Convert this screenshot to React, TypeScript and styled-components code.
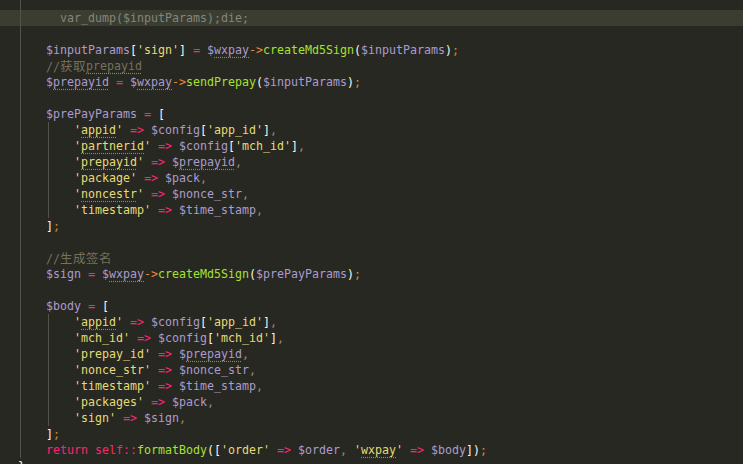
import * as React from 'react'
import styled, { createGlobalStyle } from 'styled-components'

type Kind = 'v' | 's' | 'o' | 'f' | 'p' | 'a' | 'sc' | 'c' | 'cm' | 'k' | 'd' | 'sp'

const colors: Record<Kind, string> = {
  v: '#ab9bce',
  s: '#e6db74',
  o: '#f92672',
  f: '#a6e22e',
  p: '#f8f8f2',
  a: '#f2843c',
  sc: '#cf8a2e',
  c: '#a08870',
  cm: '#75715e',
  k: '#f92672',
  d: '#85857a',
  sp: '#f8f8f2',
}

const GlobalStyle = createGlobalStyle`
  html, body {
    margin: 0;
    padding: 0;
    background: #272822;
  }
  #root {
    height: 464px;
    overflow: hidden;
  }
`

const Editor = styled.div`
  background: #272822;
  height: 470px;
  margin-top: -6px;
  font-family: "DejaVu Sans Mono", "Liberation Mono", monospace;
  font-size: 11.63px;
  line-height: 16px;
`

const Row = styled.div<{ $active?: boolean }>`
  display: flex;
  align-items: center;
  height: 16px;
  padding-left: 18px;
  white-space: pre;
  background: ${(p) => (p.$active ? '#3c3d31' : 'transparent')};
`

// indent guide, one per indent level
const Guide = styled.span`
  display: inline-block;
  flex: none;
  width: 28px;
  height: 16px;
  background: linear-gradient(
    to right,
    transparent 2px,
    #53534b 2px,
    #53534b 3px,
    transparent 3px
  );
`

const Lead = styled.span`
  display: inline-block;
  width: 14px;
`

const Token = styled.span<{ $kind: Kind; $squiggle?: boolean }>`
  color: ${(p) => colors[p.$kind]};
  text-decoration: ${(p) => (p.$squiggle ? 'underline dotted #789c3c' : 'none')};
  text-underline-offset: 3px;
`

const Cjk = styled.span`
  font-family: "Noto Sans CJK SC", sans-serif;
  font-size: 12.5px;
  letter-spacing: 0.5px;
`

type Tok = [Kind, string, boolean?]
type Line = { guides: number; lead?: boolean; toks: Tok[]; active?: boolean }

const entry = (key: Tok[], val: Tok[]): Line => ({
  guides: 2,
  toks: [...key, ['sp', ' '], ['o', '=>'], ['sp', ' '], ...val, ['c', ',']],
})

const cfg = (k: string): Tok[] => [
  ['v', '$config'],
  ['p', '['],
  ['s', `'${k}'`],
  ['p', ']'],
]

const key = (k: string, sq = false): Tok[] =>
  sq ? [['s', "'"], ['s', k, true], ['s', "'"]] : [['s', `'${k}'`]]

const lines: Line[] = [
  { guides: 1, toks: [] },
  { guides: 1, lead: true, toks: [['d', 'var_dump($inputParams);die;']], active: true },
  { guides: 1, toks: [] },
  {
    guides: 1,
    toks: [
      ['v', '$inputParams'], ['p', '['], ['s', "'sign'"], ['p', ']'], ['sp', ' '], ['o', '='], ['sp', ' '],
      ['v', '$'], ['v', 'wxpay', true], ['a', '->'], ['f', 'createMd5Sign'], ['p', '('],
      ['v', '$inputParams'], ['p', ')'], ['sc', ';'],
    ],
  },
  { guides: 1, toks: [['cm', '//\u83b7\u53d6'], ['cm', 'prepayid', true]] },
  {
    guides: 1,
    toks: [
      ['v', '$'], ['v', 'prepayid', true], ['sp', ' '], ['o', '='], ['sp', ' '],
      ['v', '$'], ['v', 'wxpay', true], ['a', '->'], ['f', 'sendPrepay'], ['p', '('],
      ['v', '$inputParams'], ['p', ')'], ['sc', ';'],
    ],
  },
  { guides: 1, toks: [] },
  { guides: 1, toks: [['v', '$prePayParams'], ['sp', ' '], ['o', '='], ['sp', ' '], ['p', '[']] },
  entry(key('appid', true), cfg('app_id')),
  entry(key('partnerid', true), cfg('mch_id')),
  entry(key('prepayid', true), [['v', '$'], ['v', 'prepayid', true]]),
  entry(key('package'), [['v', '$pack']]),
  entry(key('noncestr', true), [['v', '$nonce_str']]),
  entry(key('timestamp'), [['v', '$time_stamp']]),
  { guides: 1, toks: [['p', ']'], ['sc', ';']] },
  { guides: 1, toks: [] },
  { guides: 1, toks: [['cm', '//\u751f\u6210\u7b7e\u540d']] },
  {
    guides: 1,
    toks: [
      ['v', '$sign'], ['sp', ' '], ['o', '='], ['sp', ' '],
      ['v', '$'], ['v', 'wxpay', true], ['a', '->'], ['f', 'createMd5Sign'], ['p', '('],
      ['v', '$prePayParams'], ['p', ')'], ['sc', ';'],
    ],
  },
  { guides: 1, toks: [] },
  { guides: 1, toks: [['v', '$body'], ['sp', ' '], ['o', '='], ['sp', ' '], ['p', '[']] },
  entry(key('appid', true), cfg('app_id')),
  entry(key('mch_id'), cfg('mch_id')),
  entry(key('prepay_id'), [['v', '$'], ['v', 'prepayid', true]]),
  entry(key('nonce_str'), [['v', '$nonce_str']]),
  entry(key('timestamp'), [['v', '$time_stamp']]),
  entry(key('packages'), [['v', '$pack']]),
  entry(key('sign'), [['v', '$sign']]),
  { guides: 1, toks: [['p', ']'], ['sc', ';']] },
  {
    guides: 1,
    toks: [
      ['k', 'return'], ['sp', ' '], ['k', 'self::'], ['f', 'formatBody'], ['p', '(['],
      ['s', "'order'"], ['sp', ' '], ['o', '=>'], ['sp', ' '], ['v', '$order'], ['c', ','], ['sp', ' '],
      ['s', "'"], ['s', 'wxpay', true], ['s', "'"], ['sp', ' '], ['o', '=>'], ['sp', ' '],
      ['v', '$body'], ['p', '])'], ['sc', ';'],
    ],
  },
  { guides: 0, toks: [['p', '}']] },
]

const renderText = (text: string) => {
  // CJK runs get their own font
  const parts = text.split(/([\u4e00-\u9fff]+)/)
  return parts.map((part, i) =>
    /[\u4e00-\u9fff]/.test(part) ? <Cjk key={i}>{part}</Cjk> : part
  )
}

export default function App() {
  return (
    <>
      <GlobalStyle />
      <Editor>
        {lines.map((line, i) => (
          <Row key={i} $active={line.active}>
            {Array.from({ length: line.guides }).map((_, g) => (
              <Guide key={g} />
            ))}
            {line.lead && <Lead />}
            {line.toks.map(([kind, text, sq], j) => (
              <Token key={j} $kind={kind} $squiggle={sq}>
                {renderText(text)}
              </Token>
            ))}
          </Row>
        ))}
      </Editor>
    </>
  )
}
